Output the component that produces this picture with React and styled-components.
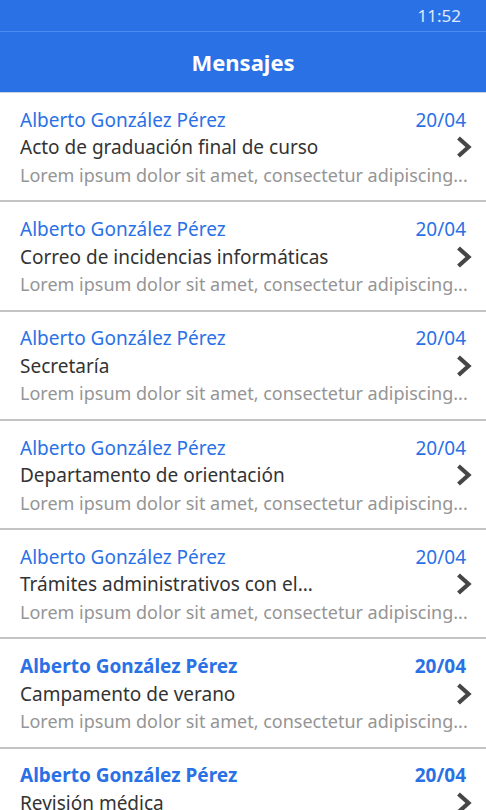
import styled, { createGlobalStyle } from "styled-components";

const GlobalStyle = createGlobalStyle`
    html, body {
        margin: 0;
        padding: 0;
        background: #ffffff;
    }
    body {
        font-family: "Noto Sans", "Open Sans", sans-serif;
        overflow: hidden;
    }
`

const Screen = styled.div`
    width: 486px;
    height: 810px;
    overflow: hidden;
    display: flex;
    flex-direction: column;
    background: #ffffff;
`

const StatusBar = styled.div`
    height: 32px;
    flex-shrink: 0;
    box-sizing: border-box;
    background: #2a71e6;
    border-bottom: 1px solid #4d8bef;
    display: flex;
    justify-content: flex-end;
    align-items: center;
    padding-right: 25px;
    color: #dfe9fb;
    font-size: 17px;
`

const Header = styled.div`
    height: 61px;
    flex-shrink: 0;
    box-sizing: border-box;
    background: #2a71e6;
    border-bottom: 1px solid #c9d3e2;
    display: flex;
    justify-content: center;
    align-items: center;
    color: #ffffff;
    font-size: 22px;
    font-weight: 700;
`

const List = styled.div`
    display: flex;
    flex-direction: column;
    flex-shrink: 0;
`

const Item = styled.div`
    height: 109.25px;
    flex-shrink: 0;
    box-sizing: border-box;
    padding: 13px 20px 0 20px;
    border-bottom: 2px solid #c4c4c4;
    display: flex;
    flex-direction: column;
`

const Line = styled.div`
    height: 27.5px;
    display: flex;
    align-items: center;
    justify-content: space-between;
    white-space: nowrap;
`

const Name = styled.span`
    color: #2a71e6;
    font-size: 19px;
    font-weight: ${p => (p.$unread ? 700 : 400)};
`

const DateText = styled(Name)``

const Subject = styled.span`
    color: #333333;
    font-size: 19px;
`

const Preview = styled.span`
    color: #959595;
    font-size: 18px;
`

const Chevron = styled.svg`
    width: 17px;
    height: 24px;
    margin-right: -7px;
    flex-shrink: 0;
`

const messages = [
    { subject: "Acto de graduación final de curso" },
    { subject: "Correo de incidencias informáticas" },
    { subject: "Secretaría" },
    { subject: "Departamento de orientación" },
    { subject: "Trámites administrativos con el..." },
    { subject: "Campamento de verano", unread: true },
    { subject: "Revisión médica", unread: true },
]

export default function App(){
    return(
    <Screen>
        <GlobalStyle/>
        <StatusBar>11:52</StatusBar>
        <Header>Mensajes</Header>
        <List>
            {messages.map((m, i) => (
                <Item key={i}>
                    <Line>
                        <Name $unread={m.unread}>Alberto González Pérez</Name>
                        <DateText $unread={m.unread}>20/04</DateText>
                    </Line>
                    <Line>
                        <Subject>{m.subject}</Subject>
                        <Chevron viewBox="0 0 17 24">
                            <path d="M2.5 3 L12.5 12 L2.5 21" fill="none" stroke="#464646" strokeWidth="4.2" strokeLinejoin="miter"/>
                        </Chevron>
                    </Line>
                    <Line>
                        <Preview>Lorem ipsum dolor sit amet, consectetur adipiscing...</Preview>
                    </Line>
                </Item>
            ))}
        </List>
    </Screen>
    )
}
